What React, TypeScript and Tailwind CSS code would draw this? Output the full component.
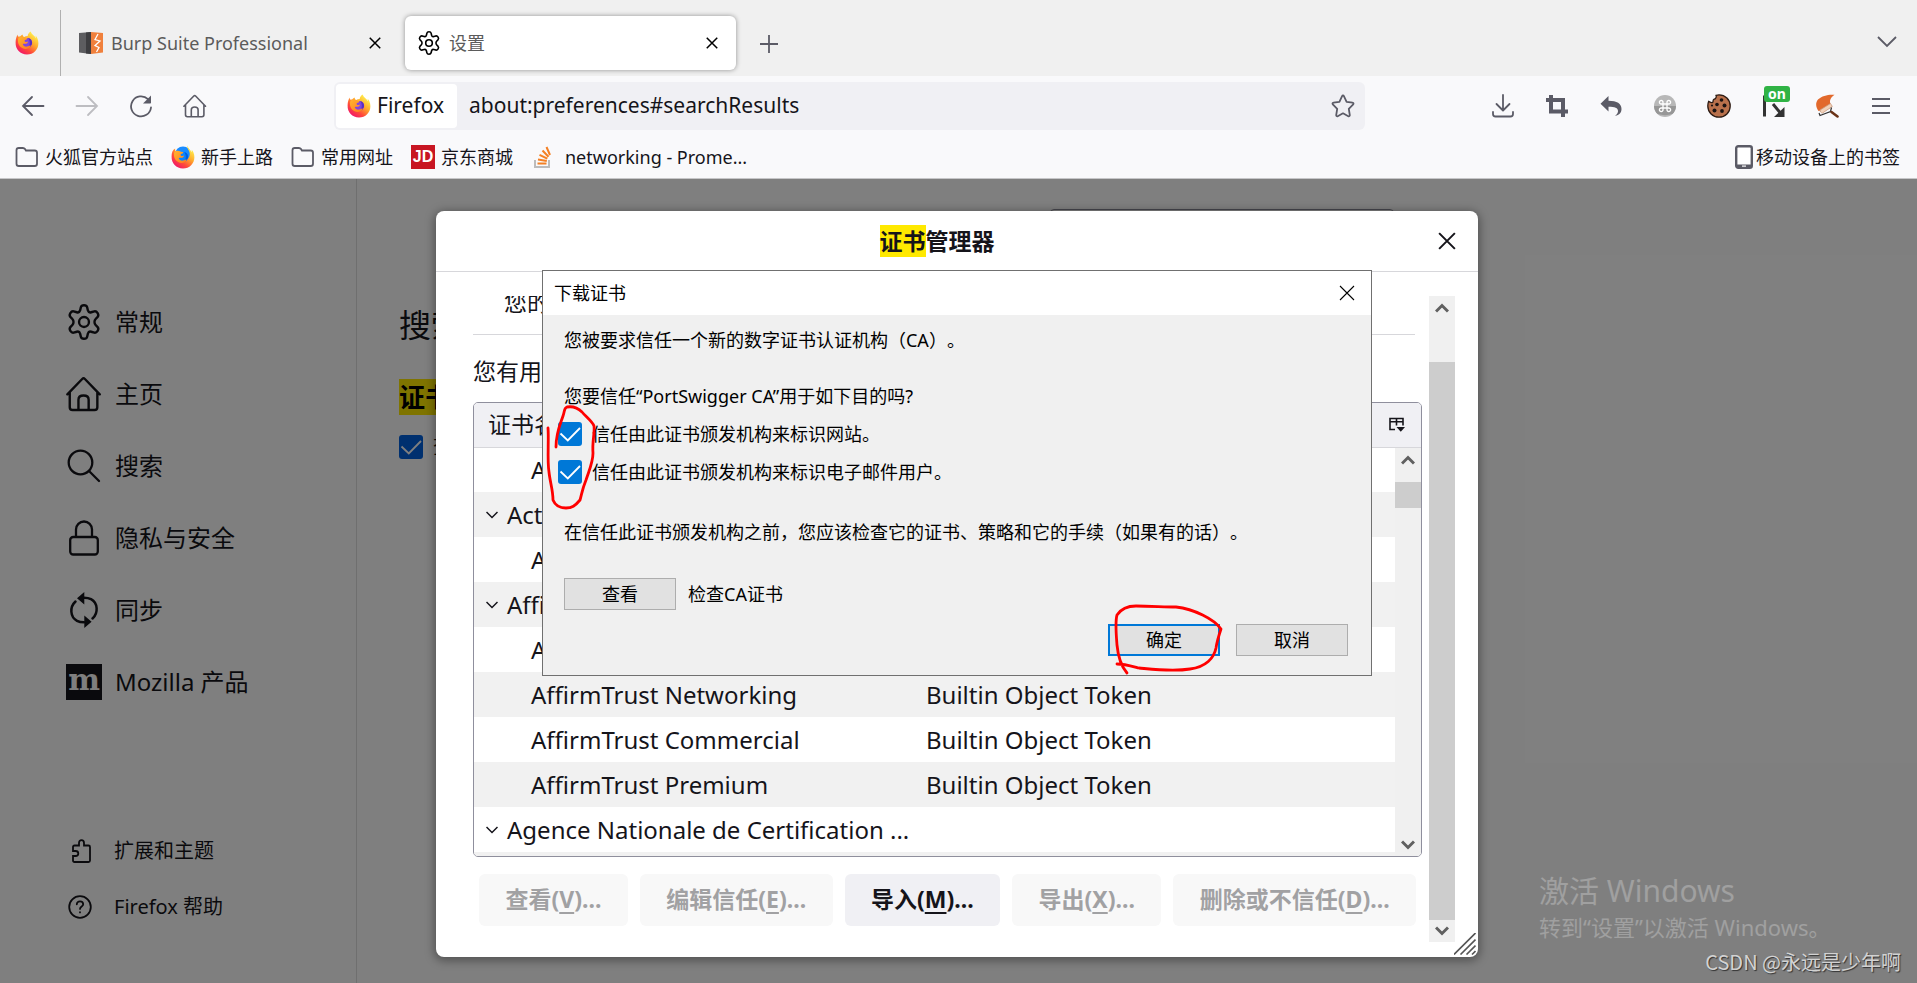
import type { ReactNode } from 'react';
import { clsx } from 'clsx';

interface CertRow {
  name: string;
  device?: string;
  group?: boolean;
}

const certRows: CertRow[] = [
  { name: 'ACCVRAIZ1', device: 'Builtin Object Token' },
  { name: 'Actalis S.p.A./03358520967', group: true },
  { name: 'Actalis Authentication Root CA', device: 'Builtin Object Token' },
  { name: 'AffirmTrust', group: true },
  { name: 'AffirmTrust Premium ECC', device: 'Builtin Object Token' },
  { name: 'AffirmTrust Networking', device: 'Builtin Object Token' },
  { name: 'AffirmTrust Commercial', device: 'Builtin Object Token' },
  { name: 'AffirmTrust Premium', device: 'Builtin Object Token' },
  { name: 'Agence Nationale de Certification ...', group: true },
];

const certActions = [
  { label: '查看', accessKey: 'V', disabled: true },
  { label: '编辑信任', accessKey: 'E', disabled: true },
  { label: '导入', accessKey: 'M', disabled: false },
  { label: '导出', accessKey: 'X', disabled: true },
  { label: '删除或不信任', accessKey: 'D', disabled: true },
];

function FirefoxLogo({ id, blue = false }: { id: string; blue?: boolean }) {
  return (
    <svg className="w-6 h-6 shrink-0" viewBox="0 0 24 24">
      <defs>
        <linearGradient id={`${id}-body`} x1="0.85" y1="0.1" x2="0.2" y2="0.95">
          <stop offset="0" stopColor="#fff44f" />
          <stop offset="0.4" stopColor="#ffa62b" />
          <stop offset="0.7" stopColor="#ff4a3a" />
          <stop offset="1" stopColor="#f0146c" />
        </linearGradient>
        <linearGradient id={`${id}-arm`} x1="0" y1="0" x2="1" y2="1">
          <stop offset="0" stopColor="#ffb52e" />
          <stop offset="1" stopColor="#ff7a1f" />
        </linearGradient>
      </defs>
      {blue && <circle cx="12" cy="9.500" r="8" fill="#1a8cff" />}
      <path
        fill={`url(#${id}-body)`}
        d={
          blue
            ? 'M16.500.6c-.6 1.800.3 3.200 1.300 4.900 1 1.800 1.300 4 .5 6-1 2.800-3.300 4.400-6.300 4.400-3.500 0-6-2.300-6.500-5.400-.2-1.600 0-3 .7-4.300L4.500 6c-.5-1-.4-2-.3-2.600C1.600 4.500.6 7.600.6 11.500.3 18.300 5.300 23.500 12 23.500c6.500 0 11.400-5 11.400-11.300 0-3.400-1.300-6-2.700-7.400.1 1 .1 1.700-.1 2.400-1-2.200-3.600-3.500-4.100-6.600z'
            : 'M15.600.6c-2 1.200-2.800 3-2.900 4.500-1.500.1-2.600.4-3.500.9-.9-.5-1.500-1.500-1.600-2.600-1.200.5-2 1.400-2.500 2.200-.8 0-1.500.1-1.900 0-.5-1-.4-1.700-.3-2.200C1.600 4.900.6 7.600.6 11.500.3 18.300 5.300 23.500 12 23.500c6.500 0 11.400-5 11.400-11.300 0-3.400-1.300-6-2.700-7.400.1 1 .1 1.700-.1 2.400C19.600 4.500 16.600 3.700 15.600.6z'
        }
      />
      <circle cx="12.300" cy="11.800" r="4.800" fill={blue ? '#0a84ff' : '#8046e0'} />
      <path fill={blue ? '#0060df' : '#5b2fc0'} d="M13 7.100c2.400.3 4.100 2.300 4.100 4.700s-2.100 4.800-4.800 4.800c1.700-1 2.500-2.800 2.500-4.800S14 8 13 7.100z" />
      <path
        fill={`url(#${id}-arm)`}
        d="M3.500 6.500C5.500 5.400 8 5.600 9.400 6.600c1.200.5 2.300.6 3 .6-.1.9-1.300 1.500-2.300 1.900-.6.3-.5 1.100-.2 1.600 1 .4 2.300.3 2.900-.1.4 1.200-.7 2-1.900 2.200-1.300.2-2.300-.2-3.200.5.500 1.600 2.300 2.600 4.300 2.300 1.800-.3 2.500-1.200 3.600-1-.5 2.300-2.700 3.500-5.100 3.300C6.500 17.600 3.400 14.500 3 11c-.1-1.700 0-3.300.5-4.500z"
      />
    </svg>
  );
}

function GearIcon({ className }: { className: string }) {
  return (
    <svg className={className} viewBox="0 0 24 24" fill="none" stroke="currentColor" strokeWidth={1.600} strokeLinejoin="round">
      <circle cx="12" cy="12" r="3.300" />
      <path d="M9.900 2.200c.2-.9.8-1.400 2.100-1.400s1.900.5 2.100 1.400l.5 2.100c.3 1 1.200 1.500 2.200 1.200l2.100-.6c.9-.2 1.500.1 2.200 1.200s.6 1.800 0 2.500L19.600 10.200c-.8.8-.8 2.800 0 3.600l1.500 1.600c.6.700.7 1.400 0 2.500s-1.300 1.400-2.200 1.200l-2.100-.6c-1-.3-1.900.2-2.200 1.200l-.5 2.100c-.2.900-.8 1.400-2.100 1.400s-1.900-.5-2.100-1.400l-.5-2.100c-.3-1-1.200-1.500-2.200-1.200l-2.100.6c-.9.2-1.500-.1-2.200-1.200s-.6-1.800 0-2.500l1.500-1.600c.8-.8.8-2.800 0-3.600L2.900 8.600c-.6-.7-.7-1.400 0-2.500s1.300-1.400 2.200-1.200l2.100.6c1 .3 1.900-.2 2.200-1.200z" />
    </svg>
  );
}

function HomeIcon({ className }: { className: string }) {
  return (
    <svg className={className} viewBox="0 0 24 24" fill="none" stroke="currentColor" strokeWidth={1.600} strokeLinecap="round" strokeLinejoin="round">
      <path d="M.9 12.200 10.800 2c.6-.6 1.200-.6 1.800 0l9.900 10.200M2.500 11v9.800c0 1.100.7 1.900 1.900 1.900h14.600c1.200 0 1.900-.8 1.900-1.900V11M8.300 22.200v-6.400c0-2 1.200-2.800 3.400-2.800s3.400.8 3.400 2.800v6.400" />
    </svg>
  );
}

function CloseIcon({ className, width = 1.500 }: { className: string; width?: number }) {
  return (
    <svg className={className} viewBox="0 0 16 16" fill="none" stroke="currentColor" strokeWidth={width}>
      <path d="M1 1l14 14M15 1L1 15" />
    </svg>
  );
}

function FolderIcon() {
  return (
    <svg className="w-6 h-6 shrink-0 text-[#5b5b66]" viewBox="0 0 24 24" fill="none" stroke="currentColor" strokeWidth={1.800}>
      <path d="M1.500 5.300c0-1.500.8-2.300 2.300-2.300h4.100c1 0 1.600.3 2.100 1.100l.9 1.400h8.800c1.500 0 2.300.8 2.300 2.300v10.900c0 1.500-.8 2.300-2.300 2.300H3.800c-1.500 0-2.300-.8-2.300-2.300z" />
    </svg>
  );
}

function ChevronIcon({ className, up = false }: { className: string; up?: boolean }) {
  return (
    <svg className={className} viewBox="0 0 14 10" fill="none" stroke="currentColor" strokeWidth={3}>
      <path d={up ? 'M1 8.500l6-6 6 6' : 'M1 1.500l6 6 6-6'} />
    </svg>
  );
}

function Checkbox({ id, className }: { id: string; className: string }) {
  return (
    <span className="relative block w-6 h-6 shrink-0">
      <input id={id} type="checkbox" defaultChecked className={clsx('block appearance-none w-6 h-6 rounded-[3px]', className)} />
      <svg className="absolute inset-0 w-6 h-6 pointer-events-none" viewBox="0 0 24 24" fill="none" stroke="#fff" strokeWidth={1.800}>
        <path d="M2.500 11.500l7.300 7L22 6" />
      </svg>
    </span>
  );
}

function ToolbarButton({ label, children, className }: { label: string; children: ReactNode; className?: string }) {
  return (
    <button aria-label={label} className={clsx('relative w-[54px] h-12 flex items-center justify-center', className)}>
      {children}
    </button>
  );
}

function Scrollbar({ className, thumbClass }: { className?: string; thumbClass: string }) {
  return (
    <div className={clsx('w-[26px] flex flex-col bg-[#f0f0f0] text-[#606060]', className)}>
      <div className="h-6 shrink-0 flex items-center justify-center">
        <ChevronIcon up className="w-[14px] h-[10px]" />
      </div>
      <div className="flex-1 flex flex-col">
        <div className={clsx('bg-[#cdcdcd]', thumbClass)} />
      </div>
      <div className="h-[22px] shrink-0 flex items-center justify-center">
        <ChevronIcon className="w-[14px] h-[10px]" />
      </div>
    </div>
  );
}

function TabBar() {
  return (
    <div className="h-[76px] bg-[#f0f0f0] flex items-center">
      <div className="w-[60px] flex pl-[15px] pt-2.5">
        <FirefoxLogo id="tab" />
      </div>
      <div className="w-px h-[66px] self-end bg-[#b0b0b0]" />
      <div className="w-[338px] flex items-center pt-2.5 pl-[18px] pr-[18px]">
        <svg className="w-6 h-6 shrink-0" viewBox="0 0 24 24">
          <path fill="#5d5d60" d="M0 2l12-1v22L0 21.500z" />
          <path fill="#3d3d40" d="M7 1.400L12 1v22l-5-.6z" />
          <path fill="#f0803c" d="M12 1l12 1v19.500L12 23z" />
          <path fill="none" stroke="#fff" strokeWidth="1.300" d="M19 3l-3 5.500 5 1.500-5 4.500 4 2-2.500 4.500" />
        </svg>
        <span className="ml-2 flex-1 text-lg text-[#5b5b5b] whitespace-nowrap">Burp Suite Professional</span>
        <button aria-label="关闭标签页">
          <CloseIcon className="w-3 h-3" width={2} />
        </button>
      </div>
      <div className="w-[331px] h-[54px] mt-2.5 ml-1.5 bg-white rounded-md shadow-[0_0_5px_rgba(0,0,0,0.4)] flex items-center px-3 pr-[18px] self-center">
        <GearIcon className="w-6 h-6 text-black" />
        <span className="ml-2 flex-1 text-lg text-[#5b5b5b]">设置</span>
        <button aria-label="关闭标签页">
          <CloseIcon className="w-3 h-3" width={2} />
        </button>
      </div>
      <button aria-label="新建标签页" className="ml-6 mt-3 text-[#5b5b66]">
        <svg className="w-[18px] h-[18px]" viewBox="0 0 18 18" stroke="currentColor" strokeWidth={1.800}>
          <path d="M9 0v18M0 9h18" />
        </svg>
      </button>
      <button aria-label="列出所有标签页" className="ml-auto mr-5 mt-2 text-[#5b5b66]">
        <svg className="w-5 h-3" viewBox="0 0 20 12" fill="none" stroke="currentColor" strokeWidth={1.800}>
          <path d="M1 1l9 9 9-9" />
        </svg>
      </button>
    </div>
  );
}

function NavBar() {
  return (
    <div className="h-[60px] flex items-center pl-1.5 pr-[9px] text-[#5b5b66]">
      <ToolbarButton label="后退">
        <svg className="w-6 h-6" viewBox="0 0 24 24" fill="none" stroke="currentColor" strokeWidth={1.800} strokeLinecap="round">
          <path d="M22.500 12H2M11 3l-9 9 9 9" />
        </svg>
      </ToolbarButton>
      <ToolbarButton label="前进" className="text-[#bdbdc1]">
        <svg className="w-6 h-6" viewBox="0 0 24 24" fill="none" stroke="currentColor" strokeWidth={1.800} strokeLinecap="round">
          <path d="M1.500 12H22M13 3l9 9-9 9" />
        </svg>
      </ToolbarButton>
      <ToolbarButton label="重新载入">
        <svg className="w-6 h-6" viewBox="0 0 24 24" fill="none" stroke="currentColor" strokeWidth={1.800} strokeLinecap="round">
          <path d="M22 13.500A10 10 0 1 1 19 5.200" />
          <path fill="currentColor" stroke="none" d="M22 1.500v7.200c0 .5-.3.800-.8.800H14z" />
        </svg>
      </ToolbarButton>
      <ToolbarButton label="主页">
        <HomeIcon className="w-6 h-6" />
      </ToolbarButton>
      <div className="ml-28 mr-[111px] flex-1 h-12 rounded-md bg-[#f0f0f4] flex items-center p-0.5">
        <div className="h-11 w-[121px] rounded bg-white text-[#15141a] text-[21px] flex items-center pl-[11px]">
          <FirefoxLogo id="url" />
          <span className="ml-1.5">Firefox</span>
        </div>
        <input
          aria-label="地址栏"
          defaultValue="about:preferences#searchResults"
          className="ml-3 flex-1 bg-transparent text-[21px] text-[#15141a] outline-none"
        />
        <button aria-label="为此页添加书签" className="mr-2">
          <svg className="w-6 h-6" viewBox="0 0 24 24" fill="none" stroke="currentColor" strokeWidth={1.800} strokeLinejoin="round">
            <path d="M12 1.500c.4 0 .7.2.9.6l2.700 5.700 6 .9c.9.100 1.200 1.100.6 1.700l-4.400 4.500 1 6.200c.1.900-.7 1.500-1.500 1.100L12 19.300l-5.300 2.900c-.8.4-1.600-.2-1.500-1.100l1-6.200-4.400-4.500c-.6-.6-.3-1.600.6-1.700l6-.9 2.700-5.700c.2-.4.5-.6.900-.6z" />
          </svg>
        </button>
      </div>
      <ToolbarButton label="下载">
        <svg className="w-6 h-6" viewBox="0 0 24 24" fill="none" stroke="currentColor" strokeWidth={1.800} strokeLinecap="round" strokeLinejoin="round">
          <path d="M12 1v15M5.500 10l6.500 6.500L18.500 10M2 18v2c0 1.700.8 2.500 2.500 2.500h15c1.700 0 2.500-.8 2.500-2.500v-2" />
        </svg>
      </ToolbarButton>
      <ToolbarButton label="截图">
        <svg className="w-[22px] h-[22px]" viewBox="0 0 22 22" fill="none" stroke="currentColor" strokeWidth={4}>
          <path d="M5 0v16.500h17M0 5h17v17" />
        </svg>
      </ToolbarButton>
      <ToolbarButton label="撤销">
        <svg className="w-[22px] h-[22px]" viewBox="0 0 22 22" fill="currentColor">
          <path d="M8.500 1v4.700C17 5.700 21.500 8.500 21.500 14c0 3.500-2 6-6.500 7 2.600-2 3-3.700 3-5 0-3-3-4.300-9.500-4.300v4.700L.5 8.700z" />
        </svg>
      </ToolbarButton>
      <ToolbarButton label="快捷键">
        <svg className="w-[22px] h-[22px]" viewBox="0 0 22 22">
          <circle cx="11" cy="11" r="11" fill="#b8b8b8" />
          <path fill="#979797" d="M0 11h22a11 11 0 0 1-3.500 8C14 20.500 8 20.500 3.500 19A11 11 0 0 1 0 11z" />
          <path
            fill="none"
            stroke="#fff"
            strokeWidth={1.300}
            d="M9 9h4v4H9zM9 9H7.300A1.800 1.800 0 1 1 9 7.300zM13 9V7.300A1.800 1.800 0 1 1 14.700 9zM13 13h1.700a1.800 1.800 0 1 1-1.700 1.700zM9 13v1.700A1.800 1.800 0 1 1 7.300 13z"
          />
        </svg>
      </ToolbarButton>
      <ToolbarButton label="Cookie">
        <svg className="w-6 h-6" viewBox="0 0 24 24">
          <path
            fill="#b9714c"
            stroke="#2d1c14"
            strokeWidth="1.300"
            d="M12 .8c-1.200 0-2 .2-3 .5.6 1.200.3 2.500-.5 3.200-.8.8-1.800.7-2.200 1.500-.4.900.2 1.800-.7 2.400-1 .7-2.600-.3-4-1C.9 9 .8 10.500.8 12A11.200 11.200 0 0 0 12 23.200 11.200 11.200 0 0 0 12 .8z"
          />
          <g fill="#1b1413">
            <circle cx="14.500" cy="6" r="1.800" />
            <circle cx="10" cy="10.500" r="1.800" />
            <circle cx="17.500" cy="11.500" r="2" />
            <circle cx="7.500" cy="16.500" r="2" />
            <circle cx="15" cy="17" r="1.900" />
            <circle cx="5" cy="11.500" r="1.100" />
          </g>
        </svg>
      </ToolbarButton>
      <ToolbarButton label="代理">
        <svg className="w-6 h-6" viewBox="0 0 24 24" fill="none" stroke="#333" strokeWidth={3}>
          <path d="M3.500 1.500v21M12 10l7 8.500" />
          <path fill="#333" stroke="none" d="M23.500 13v10H13z" />
        </svg>
        <span className="absolute top-1 left-[18px] w-[26px] h-4 rounded-[3px] bg-[#30b345] text-white text-sm leading-[15px] font-bold text-center">on</span>
      </ToolbarButton>
      <ToolbarButton label="清理">
        <svg className="w-6 h-6" viewBox="0 0 24 24">
          <path fill="#e2692c" d="M19.500.8C14 .2 7 1.500 3 5.500.2 9 .8 13 3.500 17c3-.5 11-4.500 12-7.500-1.500-2.500.5-6.500 4-8.700z" />
          <path fill="#f1d2bb" stroke="#c9987a" strokeWidth=".8" d="M5 16L15.500 9.500l1.800 3L7.500 19c-1.500 0-2.500-1.500-2.500-3z" />
          <path fill="none" stroke="#333" strokeWidth="1.200" d="M4 19l1 2.500 10.500-4 1-4" />
          <path fill="none" stroke="#6b3418" strokeWidth="2.600" strokeLinecap="round" d="M16.500 18l6 4.500" />
        </svg>
      </ToolbarButton>
      <ToolbarButton label="菜单">
        <svg className="w-[18px] h-4" viewBox="0 0 18 16" stroke="currentColor" strokeWidth={1.800}>
          <path d="M0 1h18M0 8h18M0 15h18" />
        </svg>
      </ToolbarButton>
    </div>
  );
}

function BookmarksBar() {
  return (
    <div className="h-[42px] flex items-center pl-[15px] pr-[17px] text-lg text-[#15141a] whitespace-nowrap">
      <a href="#official" className="flex items-center gap-1.5">
        <FolderIcon />
        火狐官方站点
      </a>
      <a href="#start" className="ml-[18px] flex items-center gap-1.5">
        <FirefoxLogo id="bookmark" blue />
        新手上路
      </a>
      <a href="#common" className="ml-[18px] flex items-center gap-1.5">
        <FolderIcon />
        常用网址
      </a>
      <a href="#jd" className="ml-[18px] flex items-center gap-1.5">
        <span className="w-6 h-6 bg-[#c81623] text-white text-base font-bold flex items-center justify-center font-['Liberation_Sans']">JD</span>
        京东商城
      </a>
      <a href="#networking" className="ml-[18px] flex items-center gap-2.5">
        <svg className="w-6 h-6" viewBox="0 0 24 24" fill="none" strokeWidth={2}>
          <path stroke="#bcbbbb" d="M4 15v7h14v-7" />
          <path stroke="#f48024" d="M6.500 18.500h9M7 14.500l8.800 1.500M8.500 9.800l7.800 3.800M11.500 5.500l6 6.300M15.500 2l3.500 8" />
        </svg>
        networking - Prome...
      </a>
      <a href="#mobile" className="ml-auto flex items-center gap-[3px]">
        <svg className="w-[18px] h-6 text-[#5b5b66]" viewBox="0 0 18 24">
          <rect x="1.200" y="1.200" width="15.600" height="21.600" rx="2" fill="#fff" stroke="currentColor" strokeWidth="2.400" />
          <path fill="currentColor" d="M1 19.500h16V23H1z" />
          <path fill="#fff" d="M7 20.500h4v1.200H7z" />
        </svg>
        移动设备上的书签
      </a>
    </div>
  );
}

function NavItem({ icon, children }: { icon: ReactNode; children: ReactNode }) {
  return (
    <a href="#pane" className="h-[72px] flex items-center gap-[13px] text-2xl">
      <span className="w-9 h-9 flex items-center justify-center">{icon}</span>
      {children}
    </a>
  );
}

function PreferencesPage() {
  return (
    <div className="absolute inset-0 flex bg-white text-[#15141a]">
      <aside className="w-[357px] shrink-0 border-r border-[#dedede] pt-[107px] pb-12 pl-[66px] flex flex-col">
        <NavItem icon={<GearIcon className="w-9 h-9" />}>常规</NavItem>
        <NavItem icon={<HomeIcon className="w-9 h-9" />}>主页</NavItem>
        <NavItem
          icon={
            <svg className="w-9 h-9" viewBox="0 0 36 36" fill="none" stroke="currentColor" strokeWidth={2.300} strokeLinecap="round">
              <circle cx="14.500" cy="14.500" r="11.800" />
              <path d="M23 23l10 10" />
            </svg>
          }
        >
          搜索
        </NavItem>
        <NavItem
          icon={
            <svg className="w-9 h-9" viewBox="0 0 36 36" fill="none" stroke="currentColor" strokeWidth={2.300}>
              <rect x="4.200" y="17" width="27.600" height="17.500" rx="3" />
              <path d="M10 17V9.500a8 8 0 0 1 16 0V17" />
            </svg>
          }
        >
          隐私与安全
        </NavItem>
        <NavItem
          icon={
            <svg className="w-9 h-9" viewBox="0 0 36 36" fill="none" stroke="currentColor" strokeWidth={2.500} strokeLinecap="round">
              <path d="M9.500 9.500C3.500 15 4 25 11 28.800c2.400 1.300 4.700 1.500 7 1.500M26.500 26.500C32.500 21 32 11 25 7.200c-2.400-1.300-4.700-1.500-7-1.500" />
              <path fill="currentColor" stroke="none" d="M18.300 0v12.500l-7.300-6.200zM18.300 36V23.500l7.300 6.200z" />
            </svg>
          }
        >
          同步
        </NavItem>
        <NavItem
          icon={
            <span className="w-9 h-9 bg-[#15141a] text-white text-3xl leading-8 font-bold text-center font-['DejaVu_Serif']">m</span>
          }
        >
          Mozilla 产品
        </NavItem>
        <div className="mt-auto text-xl">
          <a href="#addons" className="h-14 flex items-center gap-5">
            <svg className="w-7 h-6" viewBox="0 0 28 24" fill="none" stroke="currentColor" strokeWidth={1.800}>
              <path d="M7 9V8c0-1 .5-1.500 1.500-1.500H13V4c0-1.700 1-2.800 2.500-2.800S18 2.300 18 4v2.500h4.500c1 0 1.500.5 1.500 1.500v13.500c0 1-.5 1.500-1.500 1.500h-14c-1 0-1.500-.5-1.500-1.500V17h2.500c1.700 0 2.800-1 2.800-2.500S11.200 12 9.500 12H7z" />
            </svg>
            扩展和主题
          </a>
          <a href="#help" className="h-14 flex items-center gap-5">
            <svg className="w-7 h-6" viewBox="0 0 28 24" fill="none" stroke="currentColor" strokeWidth={1.800} strokeLinecap="round">
              <circle cx="14" cy="12" r="10.800" />
              <path d="M10.800 9.300c0-1.900 1.400-3 3.200-3s3.200 1.100 3.200 2.900c0 2.300-3.200 2.200-3.200 4.700M14 17.200v.2" />
            </svg>
            Firefox 帮助
          </a>
        </div>
      </aside>
      <main className="flex-1 pl-[42px] pt-[30px]">
        <input aria-label="在选项中查找" type="search" className="block w-[344px] h-12 ml-[651px] border border-[#8f8f9d] rounded" />
        <h1 className="mt-11 text-[32px] leading-[48px]">搜索结果</h1>
        <h2 className="mt-8 text-[26px] leading-[33px] font-bold">
          <mark className="bg-[#ffe900]">证书</mark>
        </h2>
        <div className="mt-[21px] flex items-center gap-2.5 text-xl leading-6">
          <Checkbox id="ocsp" className="bg-[#0060df]" />
          <label htmlFor="ocsp">查询 OCSP 响应服务器</label>
        </div>
      </main>
    </div>
  );
}

function CertTree() {
  return (
    <div className="w-[949px] border border-[#8f8f9d] rounded-[5px] overflow-hidden">
      <table className="w-full table-fixed text-2xl text-left">
        <colgroup>
          <col className="w-[441px]" />
          <col />
          <col className="w-6" />
          <col className="w-[26px]" />
        </colgroup>
        <thead>
          <tr className="h-11 bg-[#f0f0f4] border-b border-[#d7d7db]">
            <th className="pl-3.5 py-0 text-[23px] font-normal leading-[43px]">证书名称</th>
            <th className="p-0" />
            <th colSpan={2} className="p-0">
              <button aria-label="选择要显示的列" className="w-full h-7 border-l border-[#8f8f9d] flex items-center justify-center">
                <svg className="w-4 h-4" viewBox="0 0 16 16" fill="none" stroke="#15141a" strokeWidth={1.600}>
                  <path d="M6 12.500H1V1.500h13v7M1 4.700h13M7.500 1.500v7" />
                  <path fill="#15141a" stroke="none" d="M7.500 10H16l-4.200 4.800z" />
                </svg>
              </button>
            </th>
          </tr>
        </thead>
        <tbody>
          {certRows.map((row, i) => (
            <tr key={row.name} className="h-[45px] even:bg-[#f1f1f1]">
              <td className={clsx('p-0 leading-[44px] whitespace-nowrap', row.group ? 'pl-3' : 'pl-[57px]')}>
                {row.group ? (
                  <span className="flex items-center gap-[9px]">
                    <svg className="w-3 h-2" viewBox="0 0 12 8" fill="none" stroke="currentColor" strokeWidth={1.500}>
                      <path d="M.5 1L6 6.500 11.500 1" />
                    </svg>
                    {row.name}
                  </span>
                ) : (
                  row.name
                )}
              </td>
              <td colSpan={2} className="p-0 pl-[11px] leading-[44px]">{row.device}</td>
              {i === 0 && (
                <td rowSpan={certRows.length + 1} className="p-0">
                  <Scrollbar className="h-[408px]" thumbClass="mt-2.5 h-[26px]" />
                </td>
              )}
            </tr>
          ))}
          <tr className="h-[3px] bg-[#f1f1f1]">
            <td colSpan={3} className="p-0" />
          </tr>
        </tbody>
      </table>
    </div>
  );
}

function DownloadCertDialog() {
  return (
    <div role="dialog" aria-label="下载证书" className="absolute left-[106px] top-[59px] w-[830px] h-[406px] border border-[#707070] bg-[#f0f0f0] text-black text-lg leading-6 flex flex-col">
      <div className="h-11 bg-white flex items-center justify-between pl-[11px] pr-4">
        <span>下载证书</span>
        <button aria-label="关闭">
          <CloseIcon className="w-4 h-4" width={1.100} />
        </button>
      </div>
      <div className="flex-1 pl-[21px] pr-[23px] pt-[13px]">
        <p className="[text-spacing-trim:space-all]">您被要求信任一个新的数字证书认证机构（CA）。</p>
        <p className="mt-8">您要信任“PortSwigger CA”用于如下目的吗?</p>
        <div className="-ml-1.5 mt-3.5 flex items-center gap-2.5">
          <Checkbox id="trust-ssl" className="bg-[#0078d7]" />
          <label htmlFor="trust-ssl">信任由此证书颁发机构来标识网站。</label>
        </div>
        <div className="-ml-1.5 mt-3.5 flex items-center gap-2.5">
          <Checkbox id="trust-email" className="bg-[#0078d7]" />
          <label htmlFor="trust-email">信任由此证书颁发机构来标识电子邮件用户。</label>
        </div>
        <p className="mt-9 [text-spacing-trim:space-all]">在信任此证书颁发机构之前，您应该检查它的证书、策略和它的手续（如果有的话）。</p>
        <div className="mt-[34px] flex items-center gap-3">
          <button className="w-28 h-8 bg-[#e1e1e1] border border-[#adadad]">查看</button>
          <span>检查CA证书</span>
        </div>
        <div className="mt-3.5 flex justify-end gap-4">
          <button className="w-28 h-8 bg-[#e1e1e1] border-2 border-[#0078d7]">确定</button>
          <button className="w-28 h-8 bg-[#e1e1e1] border border-[#adadad]">取消</button>
        </div>
      </div>
    </div>
  );
}

function CertManager() {
  return (
    <div className="relative w-[1042px] h-[746px] mr-[3px] bg-white rounded-lg shadow-[0_2px_10px_2px_rgba(0,0,0,0.35)] text-[#15141a] text-[23px]">
      <div className="h-[61px] border-b border-[#d7d7db] flex items-center pr-[22px]">
        <h2 className="flex-1 text-center font-bold leading-[29px]">
          <mark className="bg-[#ffe900] text-inherit">证书</mark>管理器
        </h2>
        <button aria-label="关闭">
          <CloseIcon className="w-[18px] h-[18px]" width={1.800} />
        </button>
      </div>
      <div className="mt-6 ml-[37px] mr-[23px] h-[646px] flex justify-between overflow-hidden">
        {/* scrolled down a little, so the tab labels are cut off at the top */}
        <div className="-mt-[26px] w-[949px]">
          <div className="w-[942px] h-[65px] pl-[31px] border-b border-[#d7d7db] flex items-center">
            <button>您的证书</button>
          </div>
          <p className="h-[67px] pt-4 leading-10">您有用来识别这些证书颁发机构的证书文件</p>
          <CertTree />
          <div className="mt-[17px] px-1.5 flex gap-3">
            {certActions.map((action) => (
              <button
                key={action.accessKey}
                disabled={action.disabled}
                className="h-[52px] grow rounded-md bg-[#f0f0f4] font-bold disabled:bg-[#f8f8f8] disabled:text-[#a1a1a3]"
              >
                {action.label}(<span className="underline underline-offset-4 decoration-2">{action.accessKey}</span>)...
              </button>
            ))}
          </div>
        </div>
        <Scrollbar thumbClass="mt-[42px] h-[558px]" />
      </div>
      <svg className="absolute right-0.5 bottom-0.5 w-[22px] h-[22px] text-[#555]" viewBox="0 0 22 22" stroke="currentColor" strokeWidth={1.600}>
        <path d="M0 21.500L21.500 0M6.500 21.500L21.500 6.500M12.500 21.500l9-9M18 21.500l3.500-3.500" />
      </svg>
      <DownloadCertDialog />
      {/* hand-drawn marks around the tick boxes and the OK button */}
      <svg className="absolute left-[106px] top-[189px] w-[600px] h-[290px] pointer-events-none" viewBox="542 400 600 290" fill="none" stroke="#f00" strokeWidth={2.800} strokeLinecap="round" strokeLinejoin="round">
        <path d="M556 447C556 433 560 425 563 416C565 410 564 408 567 407C573 406 578 408 582 412C586 417 592 421 594 426C595 433 592 441 593 453C593 462 590 468 586 480C582 490 582 493 580 500C575 506 572 508 566 508C560 508 555 505 553 500C553 490 550 482 549 472C547 460 549 440 548 428" />
      </svg>
      <svg className="absolute left-[660px] top-[380px] w-[180px] h-[100px] pointer-events-none" viewBox="1096 591 180 100" fill="none" stroke="#f00" strokeWidth={2.800} strokeLinecap="round" strokeLinejoin="round">
        <path d="M1127 673C1121 666 1118 656 1117 645C1116 632 1115 622 1117 615C1121 609 1128 606 1136 606C1150 606 1165 607 1176 607C1194 609 1214 619 1221 629C1219 635 1217 641 1216 648C1214 658 1206 667 1190 669C1172 672 1150 669 1139 668C1131 666 1124 664 1117 664" />
      </svg>
    </div>
  );
}

export default function App() {
  return (
    <div className="min-h-screen flex flex-col overflow-hidden font-['Noto_Sans','Noto_Sans_CJK_SC',sans-serif]">
      <header className="bg-[#f9f9fb] border-b border-[#c6c6c8]">
        <TabBar />
        <NavBar />
        <BookmarksBar />
      </header>

      <div className="relative flex-1 min-h-[804px]">
        <PreferencesPage />
        <div className="absolute inset-0 bg-black/50 flex justify-center pt-8">
          <CertManager />
        </div>

        <div className="absolute right-[94px] bottom-10 w-[284px] text-[#a0a0a0] whitespace-nowrap">
          <p className="text-3xl leading-10">激活 Windows</p>
          <p className="text-[22px] leading-8">转到“设置”以激活 Windows。</p>
        </div>
        <p className="absolute right-4 bottom-1.5 text-xl leading-[30px] text-[#d2d2d2] [text-shadow:1px_1px_1px_#333] font-['Noto_Sans_CJK_SC']">
          CSDN @永远是少年啊
        </p>
      </div>
    </div>
  );
}
